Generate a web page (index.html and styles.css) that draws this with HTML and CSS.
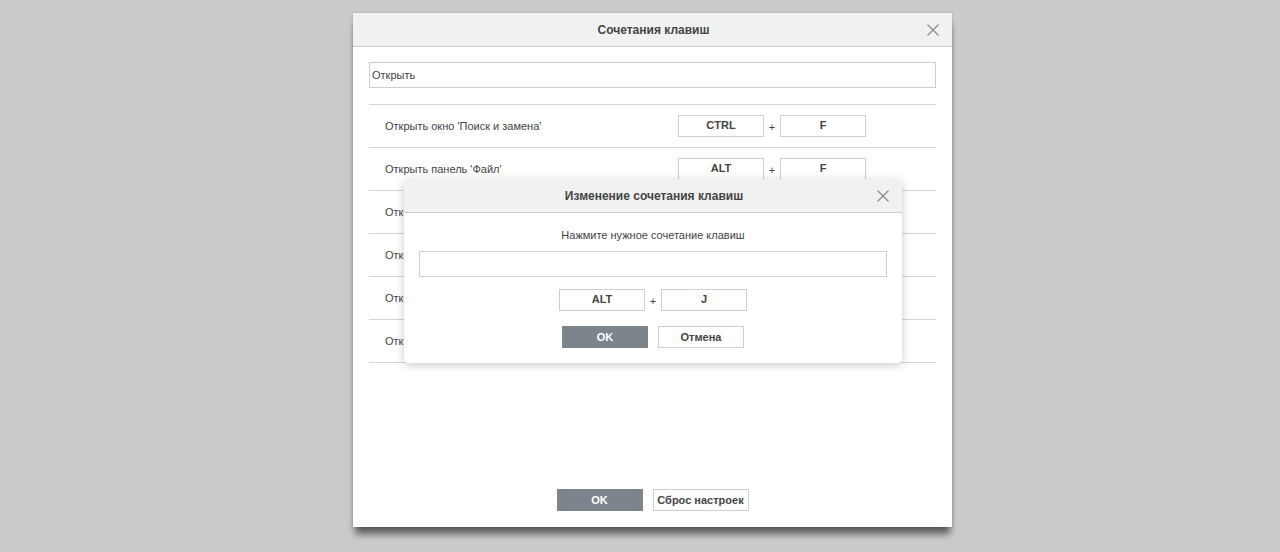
FILE: index.html
```html
<!DOCTYPE html>
<html lang="ru">
<head>
<meta charset="utf-8">
<title>Сочетания клавиш</title>
<link rel="stylesheet" href="styles.css">
</head>
<body>
<div class="desk">
  <div class="dialog main">
    <div class="head">
      <span class="title">Сочетания клавиш</span>
      <svg class="close" width="12" height="12" viewBox="0 0 12 12"><path d="M0.5 0.5L11.5 11.5M11.5 0.5L0.5 11.5" stroke="#8a8a8a" stroke-width="1.2" fill="none"/></svg>
    </div>
    <div class="body">
      <div class="search">Открыть</div>
      <div class="list">
        <div class="row"><span class="label">Открыть окно 'Поиск и замена'</span><div class="keys"><span class="key">CTRL</span><span class="plus">+</span><span class="key">F</span></div></div>
        <div class="row"><span class="label">Открыть панель 'Файл'</span><div class="keys"><span class="key">ALT</span><span class="plus">+</span><span class="key">F</span></div></div>
        <div class="row"><span class="label">Открыть панель 'Главная'</span><div class="keys"><span class="key">ALT</span><span class="plus">+</span><span class="key">H</span></div></div>
        <div class="row"><span class="label">Открыть панель 'Вставка'</span><div class="keys"><span class="key">ALT</span><span class="plus">+</span><span class="key">N</span></div></div>
        <div class="row"><span class="label">Открыть панель 'Макет'</span><div class="keys"><span class="key">ALT</span><span class="plus">+</span><span class="key">P</span></div></div>
        <div class="row"><span class="label">Открыть панель 'Вид'</span><div class="keys"><span class="key">ALT</span><span class="plus">+</span><span class="key">W</span></div></div>
      </div>
      <div class="spacer"></div>
      <div class="buttons">
        <button class="btn primary">OK</button>
        <button class="btn reset">Сброс настроек</button>
      </div>
    </div>
  </div>

  <div class="dialog sub">
    <div class="head">
      <span class="title">Изменение сочетания клавиш</span>
      <svg class="close" width="12" height="12" viewBox="0 0 12 12"><path d="M0.5 0.5L11.5 11.5M11.5 0.5L0.5 11.5" stroke="#8a8a8a" stroke-width="1.2" fill="none"/></svg>
    </div>
    <div class="sub-body">
      <div class="hint">Нажмите нужное сочетание клавиш</div>
      <div class="capture"></div>
      <div class="keys center"><span class="key">ALT</span><span class="plus">+</span><span class="key">J</span></div>
      <div class="buttons">
        <button class="btn primary">OK</button>
        <button class="btn">Отмена</button>
      </div>
    </div>
  </div>
</div>
</body>
</html>
```

FILE: styles.css
```css
* { box-sizing: border-box; }
html, body { margin: 0; padding: 0; }
body {
  background: #cbcbcb;
  font-family: "Liberation Sans", Arial, sans-serif;
  color: #444;
  width: 1280px;
  height: 552px;
  overflow: hidden;
}
.desk { position: relative; width: 1280px; height: 552px; }

.dialog {
  position: absolute;
  background: #fff;
  display: flex;
  flex-direction: column;
}
.main {
  left: 353px;
  top: 13px;
  width: 599px;
  height: 514px;
  box-shadow: 0 9px 7px -2px rgba(0,0,0,0.55), 0 0 3px rgba(0,0,0,0.15);
}
.head {
  position: relative;
  height: 34px;
  background: #f1f1f1;
  border-bottom: 1px solid #cbcbcb;
  display: flex;
  align-items: center;
  justify-content: center;
  flex: none;
}
.title {
  font-size: 12px;
  font-weight: bold;
  color: #444;
  padding-left: 2px;
}
.close {
  position: absolute;
  right: 13px;
  top: 11px;
}
.body {
  flex: 1;
  display: flex;
  flex-direction: column;
  padding: 15px 16px 16px 16px;
}
.search {
  height: 26px;
  border: 1px solid #cfcfcf;
  font-size: 11px;
  line-height: 24px;
  padding-left: 2px;
  color: #444;
}
.list {
  margin-top: 16px;
  border-top: 1px solid #d5d5d5;
}
.row {
  height: 43px;
  border-bottom: 1px solid #d5d5d5;
  display: flex;
  align-items: center;
}
.label {
  font-size: 11px;
  padding-left: 16px;
  width: 309px;
  flex: none;
}
.keys {
  display: flex;
  align-items: center;
}
.keys.center { justify-content: center; }
.key {
  width: 86px;
  height: 22px;
  border: 1px solid #cfcfcf;
  font-size: 11px;
  font-weight: bold;
  line-height: 19px;
  text-align: center;
  color: #444;
  background: #fff;
}
.plus {
  width: 16px;
  text-align: center;
  font-size: 11px;
  padding-top: 2px;
}
.spacer { flex: 1; }
.buttons {
  display: flex;
  justify-content: center;
  gap: 10px;
}
.btn {
  height: 22px;
  min-width: 86px;
  border: 1px solid #cfcfcf;
  background: #fff;
  font-family: "Liberation Sans", Arial, sans-serif;
  font-size: 11px;
  font-weight: bold;
  color: #444;
  padding: 0 3px;
  margin: 0;
}
.btn.primary {
  background: #7d858c;
  border-color: #7d858c;
  color: #fff;
}
.btn.reset { min-width: 96px; }

.sub {
  left: 404px;
  top: 179px;
  width: 498px;
  height: 184px;
  border-radius: 4px;
  overflow: hidden;
  box-shadow: 0 2px 10px rgba(0,0,0,0.22);
}
.sub .close { right: 13px; top: 11px; }
.sub-body {
  padding: 16px 15px 14px 15px;
  display: flex;
  flex-direction: column;
}
.hint {
  font-size: 11px;
  text-align: center;
  line-height: 13px;
}
.capture {
  margin-top: 9px;
  height: 26px;
  border: 1px solid #cfcfcf;
}
.sub-body .keys { margin-top: 12px; }
.sub-body .buttons { margin-top: 15px; }
.sub-body .plus { width: 16px; }
```
